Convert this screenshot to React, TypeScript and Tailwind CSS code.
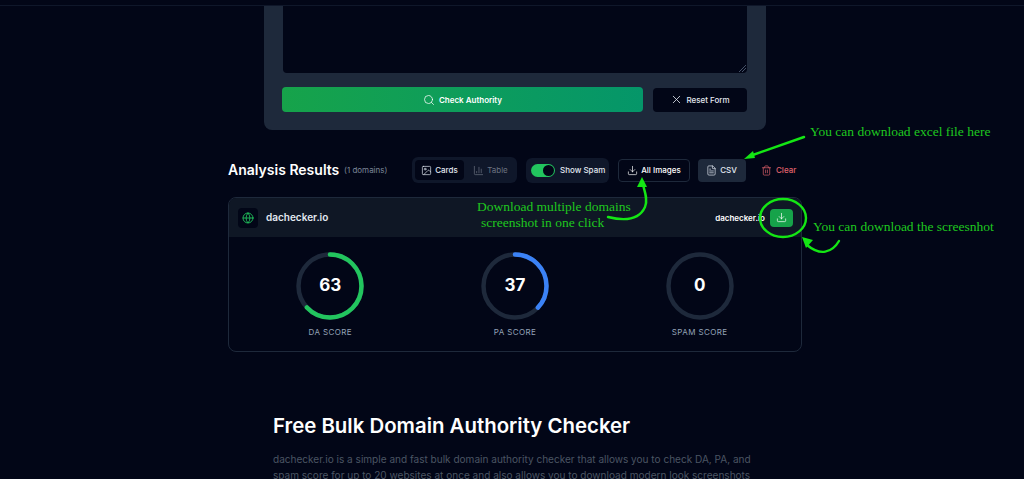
import React from "react";
import { Search, X, Image, ChartColumn, Download, FileText, Trash2, Globe } from "lucide-react";

function Gauge({ value, label, color }: { value: number; label: string; color: string }) {
  const r = 31.5;
  const c = 2 * Math.PI * r;
  return (
    <div className="flex flex-col items-center">
      <div className="relative w-[68px] h-[68px]">
        <svg width="68" height="68" viewBox="0 0 68 68" className="-rotate-90">
          <circle cx="34" cy="34" r={r} fill="none" stroke="#1e293b" strokeWidth="4.5" />
          {value > 0 && (
            <circle cx="34" cy="34" r={r} fill="none" stroke={color} strokeWidth="4.5" strokeLinecap="round" strokeDasharray={`${(c * value) / 100} ${c}`} />
          )}
        </svg>
        <div className="absolute inset-0 flex items-center justify-center text-[17px] font-bold text-white">{value}</div>
      </div>
      <div className="mt-[6px] text-[8px] leading-[12px] tracking-[0.4px] text-[#94a3b8]">{label}</div>
    </div>
  );
}

export default function App() {
  return (
    <div className="relative w-[1024px] h-[479px] overflow-hidden bg-[#020617] font-['Inter',sans-serif] text-white">
      <div className="h-[6px] border-b border-[#0f172a]" />
      <div className="ml-[264px] w-[502px] h-[124px] rounded-b-lg bg-[#1e293b] pl-[18px] pr-[19px] flex flex-col">
        <div className="ml-[1px] h-[67px] rounded-b bg-[#020617] relative">
          <svg className="absolute right-0 bottom-0" width="9" height="9" viewBox="0 0 9 9">
            <path d="M1 8 L8 1 M4 8 L8 4" stroke="#64748b" strokeWidth="0.7" />
          </svg>
        </div>
        <div className="mt-[14px] flex items-center gap-[10px]">
          <div className="h-[25px] w-[361px] rounded bg-gradient-to-r from-[#16a34a] to-[#059669] flex items-center justify-center gap-[4px] text-[8px] font-semibold">
            <Search size={12} strokeWidth={1.5} />
            <span>Check Authority</span>
          </div>
          <div className="h-[24px] w-[94px] rounded-sm bg-[#020617] flex items-center justify-center gap-[3px] text-[8px] font-medium text-[#e2e8f0]">
            <X size={13} strokeWidth={1.5} />
            <span>Reset Form</span>
          </div>
        </div>
      </div>

      <div className="ml-[228px] mt-[27px] w-[574px] flex items-center">
        <div className="text-[14px] font-semibold leading-[26px] w-[116px]">Analysis Results</div>
        <div className="text-[8px] text-[#7c8798] w-[68px]">(1 domains)</div>
        <div className="flex h-[26px] w-[105px] items-center rounded-md bg-[#0f172a] pl-[3px]">
          <div className="h-[20px] w-[49px] rounded bg-[#020617] flex items-center justify-center gap-[3px] text-[8px] font-medium text-[#e2e8f0]">
            <Image size={11} strokeWidth={1.5} />
            <span>Cards</span>
          </div>
          <div className="flex-1 flex items-center justify-center gap-[3px] text-[8px] text-[#6b7280]">
            <ChartColumn size={11} strokeWidth={1.5} />
            <span>Table</span>
          </div>
        </div>
        <div className="ml-[9px] flex h-[25px] w-[83px] items-center rounded-md bg-[#0f172a] pl-[5px]">
          <div className="flex h-[13px] w-[24px] items-center justify-end rounded-full bg-[#22c55e] pr-[1px]">
            <div className="h-[11px] w-[11px] rounded-full bg-[#020617]" />
          </div>
          <span className="ml-[5px] text-[8px] font-medium text-[#e2e8f0]">Show Spam</span>
        </div>
        <div className="ml-[9px] flex h-[23px] w-[72px] items-center justify-center gap-[3px] rounded border border-[#1e293b] bg-[#020617] text-[8px] font-medium">
          <Download size={11} strokeWidth={1.5} />
          <span>All Images</span>
        </div>
        <div className="ml-[8px] flex h-[23px] w-[48px] items-center justify-center gap-[3px] rounded bg-[#1e293b] pr-[1px] text-[8px] font-medium text-[#e2e8f0]">
          <FileText size={11} strokeWidth={1.5} />
          <span>CSV</span>
        </div>
        <div className="ml-[15px] flex items-center gap-[4px] text-[8px] font-medium text-[#e0626c]">
          <Trash2 size={11} strokeWidth={1.5} />
          <span>Clear</span>
        </div>
      </div>

      <div className="ml-[228px] mt-[14px] w-[574px] h-[155px] rounded-lg border border-[#1e293b] overflow-hidden">
        <div className="h-[39px] bg-[#0f1725] flex items-center pl-[9px] pr-[8px]">
          <div className="h-[20px] w-[20px] rounded bg-[#020617] flex items-center justify-center text-[#22c55e]">
            <Globe size={12} strokeWidth={1.75} />
          </div>
          <div className="ml-[8px] text-[10px] font-semibold text-[#e2e8f0]">dachecker.io</div>
          <div className="ml-auto text-[8px] font-semibold">dachecker.io</div>
          <div className="ml-[5px] h-[18px] w-[23px] rounded bg-[#16a34a] flex items-center justify-center">
            <Download size={11} strokeWidth={1.5} />
          </div>
        </div>
        <div className="grid grid-cols-3 px-[9px] pt-[15px]">
          <Gauge value={63} label="DA SCORE" color="#22c55e" />
          <Gauge value={37} label="PA SCORE" color="#3b82f6" />
          <Gauge value={0} label="SPAM SCORE" color="#ef4444" />
        </div>
      </div>

      <div className="ml-[273px] mt-[60px] w-[482px]">
        <div className="text-[20.4px] font-semibold leading-[28px]">Free Bulk Domain Authority Checker</div>
        <p className="mt-[11px] text-[10.06px] leading-[16px] text-[#4b5563] whitespace-nowrap">
          dachecker.io is a simple and fast bulk domain authority checker that allows you to check DA, PA, and<br />
          spam score for up to 20 websites at once and also allows you to download modern look screenshots
        </p>
      </div>

      <div className="absolute left-[810px] top-[124px] text-[13.5px] leading-[16px] text-[#1fc81f] font-['Liberation_Serif',serif] whitespace-nowrap">You can download excel file here</div>
      <div className="absolute left-[813px] top-[219px] text-[13.5px] leading-[16px] text-[#1fc81f] font-['Liberation_Serif',serif] whitespace-nowrap">You can download the screesnhot</div>
      <div className="absolute left-[477px] top-[199px] text-[13.5px] leading-[16px] text-[#1fc81f] font-['Liberation_Serif',serif] whitespace-nowrap">Download multiple domains</div>
      <div className="absolute left-[481px] top-[215px] text-[13.5px] leading-[16px] text-[#1fc81f] font-['Liberation_Serif',serif] whitespace-nowrap">screenshot in one click</div>

      <svg className="absolute left-0 top-0 pointer-events-none" width="1024" height="479" viewBox="0 0 1024 479">
        <g fill="none" stroke="#14e614" strokeWidth="2.4" strokeLinecap="round">
          <path d="M804 137 L750 156" />
          <path d="M608 217 C628 222 640 218 645 207 C648 200 645 192 643 185" />
          <ellipse cx="783" cy="218" rx="23" ry="19" />
          <path d="M839 241 C832 253 820 256 807 245" />
        </g>
        <g fill="#14e614">
          <polygon points="744,159 753,151 755,158" />
          <polygon points="642,177 637,187 647,187" />
          <polygon points="802,237 813,240 806,248" />
        </g>
      </svg>
    </div>
  );
}
